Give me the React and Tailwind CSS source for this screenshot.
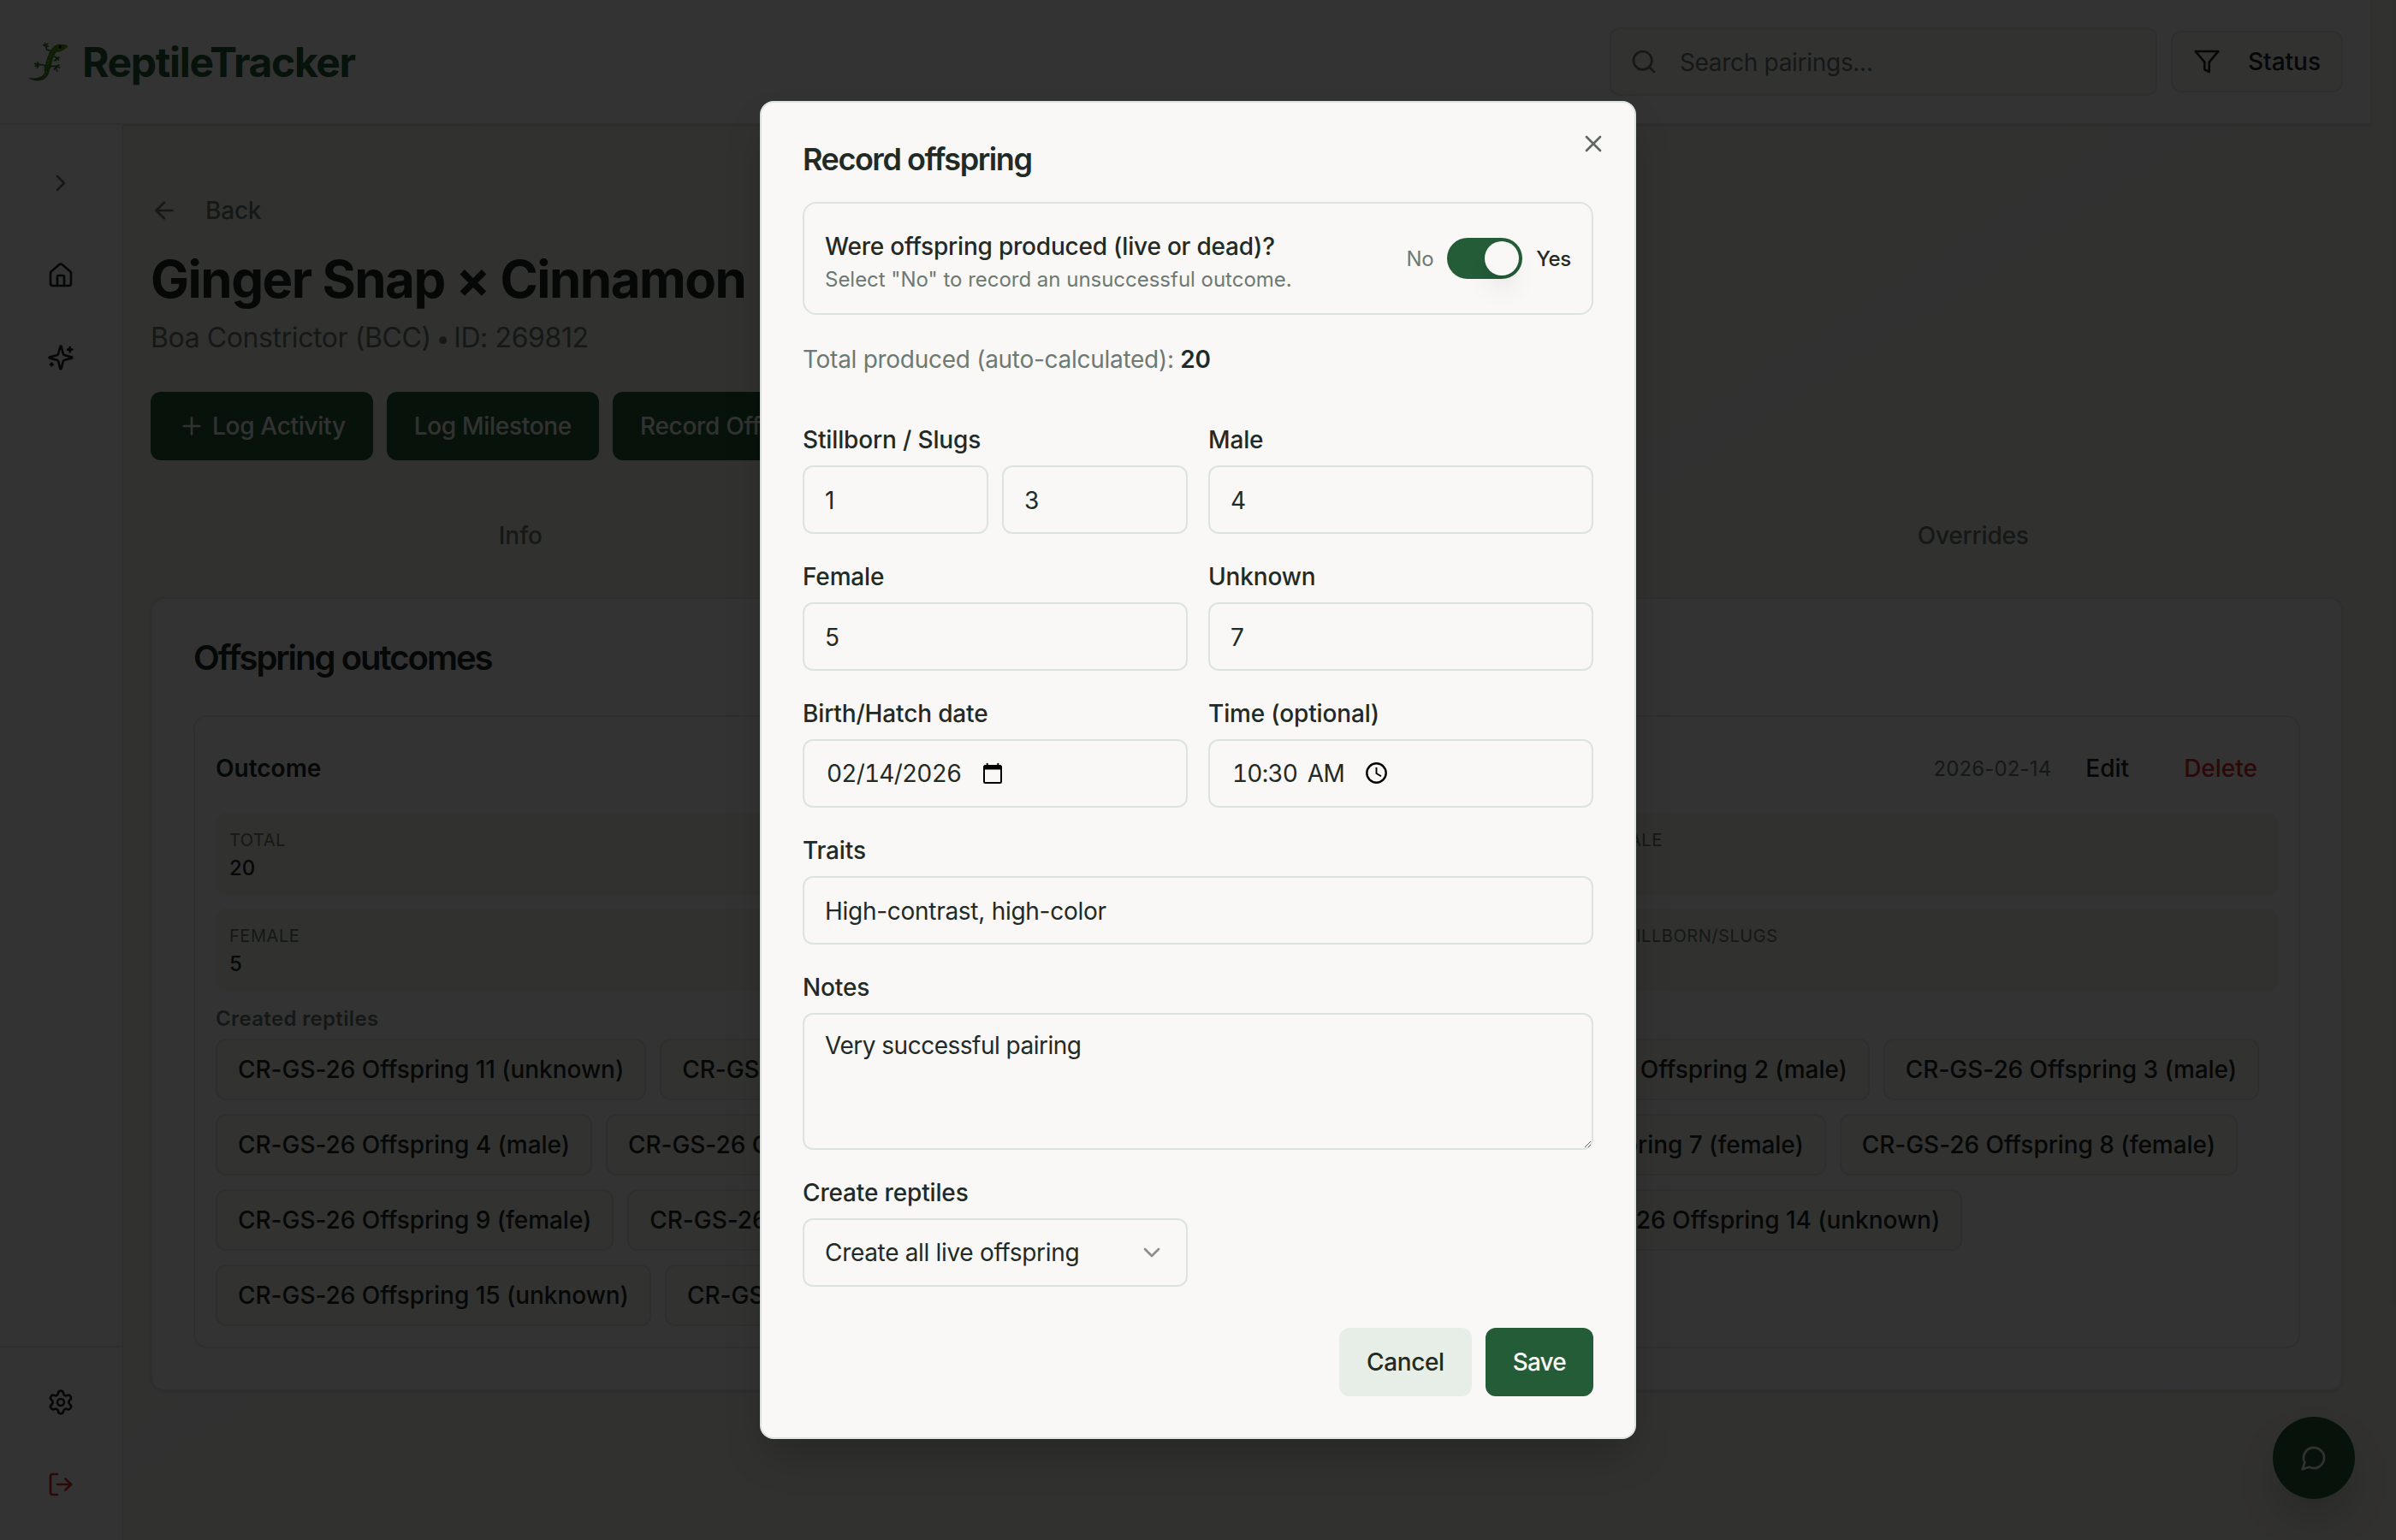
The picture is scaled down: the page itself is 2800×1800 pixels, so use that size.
import { ArrowLeft, ChevronDown, ChevronRight, House, LogOut, Plus, Search, Settings, X } from "lucide-react";

const stats = [
    { label: "Total", value: 20 },
    { label: "Live", value: 16 },
    { label: "Male", value: 4 },
    { label: "Female", value: 5 },
    { label: "Unknown", value: 7 },
    { label: "Stillborn/Slugs", value: 4 },
];

const offspring = [
    "11 (unknown)",
    "10 (unknown)",
    "1 (male)",
    "2 (male)",
    "3 (male)",
    "4 (male)",
    "5 (female)",
    "6 (female)",
    "7 (female)",
    "8 (female)",
    "9 (female)",
    "12 (unknown)",
    "13 (unknown)",
    "14 (unknown)",
    "15 (unknown)",
    "16 (unknown)",
];

function Icon({ children, className = "" }) {
    return (
        <svg
            width="32"
            height="32"
            viewBox="0 0 24 24"
            fill="none"
            stroke="currentColor"
            strokeWidth="2"
            strokeLinecap="round"
            strokeLinejoin="round"
            className={className}
        >
            {children}
        </svg>
    );
}

function GeckoLogo() {
    return (
        <svg width="48" height="48" viewBox="38 24 144 144" fill="none" strokeLinecap="round" strokeLinejoin="round">
            {/* legs and toes */}
            <g stroke="#2f7a24" strokeWidth="5">
                <path d="M126 60L106 54L102 40M102 40L94 38M102 40L99 32M102 40L109 33M102 44L111 42" />
                <path d="M122 74L140 82L138 92M140 82L150 82M140 84L147 90M138 90L132 92" />
                <path d="M106 118L96 108L78 106M78 106L64 103M78 106L66 112M78 106L72 118M78 106L74 98" />
                <path d="M112 124L122 112L138 112M138 112L150 108M138 112L151 117M138 114L142 129M138 114L132 124" />
            </g>
            {/* tail */}
            <path d="M114 116C118 138 106 154 92 160C76 167 54 162 40 152C60 156 76 155 88 147C98 140 101 130 98 114Z" fill="#3d7c28" />
            {/* body */}
            <path d="M134 54C122 66 118 80 114 96C112 106 110 114 107 122" stroke="#3b8a26" strokeWidth="20" />
            <path d="M124 66L114 84M112 92L108 112M106 132L98 146" stroke="#a9b32c" strokeWidth="5" strokeDasharray="3 9" />
            {/* head */}
            <path d="M122 58C126 42 142 33 156 35L172 37C181 39 181 45 174 49C164 58 148 64 136 64Z" fill="#5c9c22" />
            <circle cx="153" cy="45" r="6" fill="#10190c" />
        </svg>
    );
}

function Header() {
    return (
        <header className="flex h-[146px] w-[2770px] items-center justify-between border-b-2 border-[#dfe5e2] bg-[#fdfdfd] px-8 shadow-sm">
            <div className="flex items-center gap-4">
                <GeckoLogo />
                <span className="pt-0.5 text-[48px] leading-none font-bold tracking-[-1.33px] text-[#235c37]">
                    ReptileTracker
                </span>
            </div>
            <div className="flex items-center gap-4">
                <div className="flex h-20 w-[640px] items-center gap-[26px] rounded-xl border-2 border-[#dfe5e2] bg-[#f9f8f6] px-[22px] text-[#6c7a73]">
                    <Search size={32} />
                    <span className="pt-0.5 tracking-[-0.3px]">Search pairings...</span>
                </div>
                <button className="flex h-[72px] items-center gap-8 rounded-xl border-2 border-[#dfe5e2] bg-[#f9f8f6] px-6 font-medium">
                    <Icon>
                        <polygon points="22 3 2 3 10 12.46 10 19 14 21 14 12.46 22 3" />
                    </Icon>
                    Status
                </button>
            </div>
        </header>
    );
}

function Sidebar() {
    return (
        <aside className="flex w-36 flex-col justify-between border-r-2 border-[#dfe5e2] bg-[#fdfdfd]">
            <div className="flex flex-col items-center pt-[52px]">
                <ChevronRight size={32} className="text-[#6c7a73]" />
                <House size={32} className="mt-[76px]" />
                <Icon className="mt-16">
                    <path d="M9.937 15.5A2 2 0 0 0 8.5 14.063l-6.135-1.582a.5.5 0 0 1 0-.962L8.5 9.936A2 2 0 0 0 9.937 8.5l1.582-6.135a.5.5 0 0 1 .963 0L14.063 8.5A2 2 0 0 0 15.5 9.937l6.135 1.581a.5.5 0 0 1 0 .964L15.5 14.063a2 2 0 0 0-1.437 1.437l-1.582 6.135a.5.5 0 0 1-.963 0z" />
                    <path d="M20 3v4M22 5h-4M4 17v2M5 18H3" />
                </Icon>
            </div>
            <div className="flex h-[227px] flex-col items-center border-t-2 border-[#dfe5e2] pt-12">
                <Settings size={32} />
                <LogOut size={32} className="mt-16 text-[#dc2828]" />
            </div>
        </aside>
    );
}

function Outcomes() {
    return (
        <section className="mt-8 rounded-2xl border-2 border-[#dfe5e2] bg-[#fdfdfd] p-12 shadow-sm">
            <h2 className="h-10 pt-px text-[40px] leading-10 font-semibold tracking-[-2px]">Offspring outcomes</h2>
            <div className="mt-12 rounded-2xl border-2 border-[#dfe5e2] p-6">
                <div className="flex h-[72px] items-center justify-between">
                    <span className="font-semibold">Outcome</span>
                    <div className="flex items-center gap-4">
                        <span className="pt-0.5 text-[24px] tracking-[0.15px] text-[#6c7a73]">2026-02-14</span>
                        <button className="px-6 font-medium">Edit</button>
                        <button className="px-6 font-medium text-[#dc2828]">Delete</button>
                    </div>
                </div>
                <div className="mt-4 grid grid-cols-3 gap-4">
                    {stats.map((stat) => (
                        <div key={stat.label} className="h-24 rounded-xl bg-[#f3f2ed] p-4">
                            <div className="text-[20px] leading-8 tracking-[0.55px] text-[#6c7a73] uppercase">
                                {stat.label}
                            </div>
                            <div className="pt-px text-[24px] leading-8 font-medium">{stat.value}</div>
                        </div>
                    ))}
                </div>
                <div className="mt-4 h-8 pt-px text-[24px] leading-8 font-semibold tracking-[0.35px] text-[#6c7a73]">
                    Created reptiles
                </div>
                <div className="mt-2 flex flex-wrap gap-4">
                    {offspring.map((name) => (
                        <button
                            key={name}
                            className="h-[72px] rounded-xl border-2 border-[#dfe5e2] bg-[#f9f8f6] px-6 font-medium tracking-[-0.04px]"
                        >
                            CR-GS-26 Offspring {name}
                        </button>
                    ))}
                </div>
            </div>
        </section>
    );
}

function PairingPage() {
    return (
        <main className="w-[2626px] px-8 pt-20">
            <div className="flex h-10 items-center gap-8 font-medium tracking-[-0.2px] text-[#6c7a73]">
                <ArrowLeft size={32} />
                Back
            </div>
            <h1 className="mt-[24px] text-[60px] leading-[72px] font-bold tracking-[-1.5px]">
                Ginger Snap × Cinnamon
            </h1>
            <p className="mt-2 h-12 pt-px text-[32px] leading-12 tracking-[-0.4px] text-[#6c7a73]">
                Boa Constrictor (BCC)
                <span className="mr-[5px] ml-[6px] text-[28px]">•</span>
                ID: 269812
            </p>
            <div className="mt-10 flex gap-4 font-medium tracking-[-0.3px] text-[#f9f8f6]">
                <button className="flex h-20 items-center gap-2 rounded-xl bg-[#235c37] px-8">
                    <Plus size={32} />
                    Log Activity
                </button>
                <button className="h-20 rounded-xl bg-[#235c37] px-8">Log Milestone</button>
                <button className="h-20 rounded-xl bg-[#235c37] px-8">Record Offspring</button>
            </div>
            <div className="mt-12 grid h-20 grid-cols-3 items-center rounded-xl bg-[#f3f2ed] p-2 text-center font-medium text-[#6c7a73]">
                <span>Info</span>
                <span className="rounded-lg bg-[#f9f8f6] py-3">Offspring</span>
                <span className="tracking-[-0.2px]">Overrides</span>
            </div>
            <Outcomes />
        </main>
    );
}

function Field({ label, children, className = "" }) {
    return (
        <div className={className}>
            <div className="h-12 pt-px text-[32px] leading-12">
                <label className="text-[28px] font-medium tracking-[-0.15px]">{label}</label>
            </div>
            <div className="mt-2 flex gap-4">{children}</div>
        </div>
    );
}

function InputBox({ children, className = "pt-0.5" }) {
    return (
        <div
            className={`flex h-20 flex-1 items-center rounded-xl border-2 border-[#dde4e0] px-6 tracking-[-0.28px] ${className}`}
        >
            {children}
        </div>
    );
}

function CalendarIcon() {
    return (
        <svg width="22" height="24" viewBox="0 0 22 24" className="ml-[26px] text-black" fill="none" stroke="currentColor">
            <rect x="1" y="3" width="20" height="20" rx="1.5" strokeWidth="2" />
            <path d="M1 5h20" strokeWidth="5" />
            <path d="M4.7 0v4M17.3 0v4" strokeWidth="2" />
        </svg>
    );
}

function ClockIcon() {
    return (
        <svg width="25" height="25" viewBox="0 0 25 25" className="ml-[25px] text-black" fill="none" stroke="currentColor">
            <circle cx="12.5" cy="12.5" r="11.2" strokeWidth="2.4" />
            <path d="M12.5 6v7l5.500 3.300" strokeWidth="1.9" />
        </svg>
    );
}

function RecordOffspringDialog() {
    return (
        <div className="relative flex h-[1564px] w-[1024px] flex-col rounded-2xl border-2 border-[#dde4e0] bg-[#f9f8f6] p-12 shadow-2xl">
            <X size={32} className="absolute top-8 right-8 opacity-70" />
            <h2 className="text-[36px] leading-9 font-semibold tracking-[-1.46px]">Record offspring</h2>

            <div className="mt-8 flex h-[132px] items-center justify-between rounded-2xl border-2 border-[#dde4e0] p-6">
                <div>
                    <div className="h-12 pt-px text-[32px] leading-12">
                        <span className="text-[28px] font-medium tracking-[-0.21px]">
                            Were offspring produced (live or dead)?
                        </span>
                    </div>
                    <p className="h-8 pt-px text-[24px] leading-8 tracking-[-0.02px] text-[#6c7a73]">
                        Select "No" to record an unsuccessful outcome.
                    </p>
                </div>
                <div className="flex items-center gap-4 text-[24px] leading-8 tracking-[-0.3px]">
                    <span className="pt-0.5 text-[#6c7a73]">No</span>
                    <span className="flex h-12 w-[88px] items-center justify-end rounded-full bg-[#235c37] p-1">
                        <span className="size-10 rounded-full bg-[#f9f8f6] shadow-[0_20px_30px_-6px_rgb(0_0_0/0.1),0_8px_12px_-8px_rgb(0_0_0/0.1)]" />
                    </span>
                    <span className="pt-0.5 font-medium">Yes</span>
                </div>
            </div>

            <p className="mt-8 leading-10 tracking-[-0.28px] text-[#6c7a73]">
                Total produced (auto-calculated): <span className="font-semibold text-[#222a26]">20</span>
            </p>

            <div className="mt-12 grid grid-cols-2 gap-6">
                <Field label="Stillborn / Slugs">
                    <InputBox>1</InputBox>
                    <InputBox>3</InputBox>
                </Field>
                <Field label="Male">
                    <InputBox>4</InputBox>
                </Field>
                <Field label="Female">
                    <InputBox>5</InputBox>
                </Field>
                <Field label="Unknown">
                    <InputBox>7</InputBox>
                </Field>
                <Field label="Birth/Hatch date">
                    <InputBox className="pb-px">
                        <span className="pl-0.5 tracking-[-0.8px] tabular-nums">02/14/2026</span>
                        <CalendarIcon />
                    </InputBox>
                </Field>
                <Field label="Time (optional)">
                    <InputBox className="pb-px">
                        <span className="pl-0.5 tracking-[-0.8px] [word-spacing:5px] tabular-nums">10:30 AM</span>
                        <ClockIcon />
                    </InputBox>
                </Field>
                <Field label="Traits" className="col-span-2">
                    <InputBox>High-contrast, high-color</InputBox>
                </Field>
                <Field label="Notes" className="col-span-2">
                    <textarea
                        defaultValue="Very successful pairing"
                        className="h-40 flex-1 rounded-xl border-2 border-[#dde4e0] px-6 py-4 leading-10 tracking-[-0.5px]"
                    />
                </Field>
                <Field label="Create reptiles">
                    <InputBox className="pt-0">
                        <span className="flex-1 tracking-[-0.32px]">Create all live offspring</span>
                        <ChevronDown size={32} className="opacity-50" />
                    </InputBox>
                </Field>
            </div>

            <div className="mt-12 flex justify-end gap-4 font-medium">
                <button className="h-20 rounded-xl bg-[#e7eee8] px-8 tracking-[-0.4px]">Cancel</button>
                <button className="h-20 rounded-xl bg-[#235c37] px-8 tracking-[-0.8px] text-[#f9f8f6]">Save</button>
            </div>
        </div>
    );
}

export default function App() {
    return (
        <div className="relative h-[1800px] w-[2800px] overflow-hidden bg-[#f3f2ed] font-[Inter,sans-serif] text-[28px] leading-10 text-[#222a26]">
            <div className="flex h-full w-[2770px] flex-col bg-linear-to-br from-[#f3f2ed] via-[#f3f3f2] to-[#f3f2ed]">
                <Header />
                <div className="flex flex-1">
                    <Sidebar />
                    <PairingPage />
                </div>
            </div>
            <button className="absolute right-12 bottom-12 flex size-24 items-center justify-center rounded-full bg-[#235c37] text-[#f9f8f6] shadow-2xl">
                <Icon>
                    <path d="M7.9 20A9 9 0 1 0 4 16.1L2 22Z" />
                </Icon>
            </button>
            <div className="absolute inset-0 flex items-center justify-center bg-black/80">
                <RecordOffspringDialog />
            </div>
        </div>
    );
}
